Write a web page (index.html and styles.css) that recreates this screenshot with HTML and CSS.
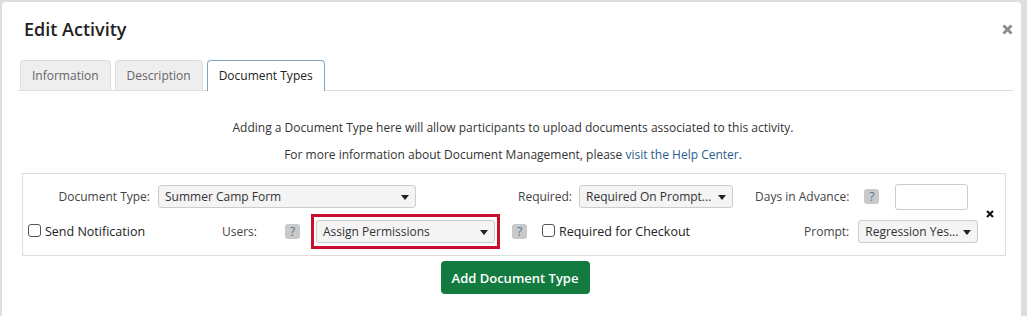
FILE: index.html
```html
<!DOCTYPE html>
<html lang="en">
<head>
    <meta charset="UTF-8">
    <title>Edit Activity</title>
    <link rel="stylesheet" href="styles.css">
</head>
<body>
    <div class="modal">
        <div class="modal-header">
            <h1>Edit Activity</h1>
            <span class="close">
                <svg width="11" height="11" viewBox="0 0 11 11"><path d="M1.5 1.5 L9.5 9.5 M9.5 1.5 L1.5 9.5" stroke="#8a8a8a" stroke-width="2.8"/></svg>
            </span>
        </div>

        <ul class="tabs">
            <li class="tab">Information</li>
            <li class="tab">Description</li>
            <li class="tab active">Document Types</li>
        </ul>

        <div class="tab-body">
            <p class="info">Adding a Document Type here will allow participants to upload documents associated to this activity.</p>
            <p class="info">For more information about Document Management, please <a href="#">visit the Help Center</a>.</p>

            <div class="doc-panel">
                <div class="form-row row-one">
                    <label class="lbl lbl-doctype">Document Type:</label>
                    <div class="select sel-doctype">Summer Camp Form<span class="caret"></span></div>
                    <label class="lbl lbl-required">Required:</label>
                    <div class="select sel-required">Required On Prompt...<span class="caret"></span></div>
                    <label class="lbl lbl-days">Days in Advance:</label>
                    <span class="help help-days">?</span>
                    <input type="text" class="days-input">
                </div>
                <div class="form-row row-two">
                    <span class="check"></span>
                    <label class="check-lbl lbl-notify">Send Notification</label>
                    <label class="lbl lbl-users">Users:</label>
                    <span class="help help-users">?</span>
                    <div class="highlight">
                        <div class="select sel-users">Assign Permissions<span class="caret"></span></div>
                    </div>
                    <span class="help help-perm">?</span>
                    <span class="check check-req"></span>
                    <label class="check-lbl">Required for Checkout</label>
                    <label class="lbl lbl-prompt">Prompt:</label>
                    <div class="select sel-prompt">Regression Yes...<span class="caret"></span></div>
                </div>
                <span class="remove">
                    <svg width="8" height="8" viewBox="0 0 8 8"><path d="M1 1 L7 7 M7 1 L1 7" stroke="#111" stroke-width="2"/></svg>
                </span>
            </div>

            <div class="actions">
                <button class="btn-add">Add Document Type</button>
            </div>
        </div>
    </div>
</body>
</html>
```

FILE: styles.css
```css
* {
    box-sizing: border-box;
    margin: 0;
    padding: 0;
}

body {
    background-color: #dedede;
    font-family: 'Open Sans', 'Noto Sans', sans-serif;
    font-size: 12px;
    color: #333;
    padding: 2px 6px 0 2px;
    height: 316px;
    overflow: hidden;
}

.modal {
    background: #fff;
    border-radius: 4px 4px 0 0;
    height: 320px;
    padding: 0 8px 0 16px;
}

.modal-header {
    display: flex;
    justify-content: space-between;
    align-items: center;
    height: 52px;
    padding: 0 0 0 6px;
}

.modal-header h1 {
    font-size: 18px;
    font-weight: 600;
    color: #222;
    margin-top: 1px;
}

.close {
    display: flex;
    margin-top: 3px;
}

.tabs {
    list-style: none;
    display: flex;
    gap: 4px;
    margin-top: 6px;
    padding-left: 2px;
    border-bottom: 1px solid #ddd;
}

.tab {
    height: 30px;
    padding: 0 11px;
    line-height: 29px;
    font-size: 12px;
    color: #666;
    background: #eee;
    border: 1px solid #ddd;
    border-bottom: none;
    border-radius: 4px 4px 0 0;
    margin-bottom: -1px;
}

.tab.active {
    background: #fff;
    color: #222;
    border-color: #7ea6c6;
    height: 31px;
}

.tab-body {
    padding-top: 28px;
    margin-right: 5px;
}

.info {
    text-align: center;
    line-height: 17px;
    margin-bottom: 10px;
}

.info a {
    color: #2a5d8c;
    text-decoration: none;
}

.doc-panel {
    position: relative;
    border: 1px solid #ddd;
    margin: 0 2px 0 4px;
    padding: 10px 0 5px;
}

.form-row {
    display: flex;
    align-items: center;
}

.row-one {
    height: 25px;
}

.row-two {
    margin-top: 4px;
    height: 37px;
    padding-left: 5px;
}

.lbl {
    color: #444;
    white-space: nowrap;
}

.lbl-doctype {
    width: 127px;
    text-align: right;
    margin-right: 8px;
}

.lbl-required {
    width: 156px;
    text-align: right;
    margin-right: 7px;
}

.lbl-days {
    margin-left: 22px;
}

.select {
    position: relative;
    height: 23px;
    line-height: 21px;
    padding-left: 6px;
    background: #f4f4f4;
    border: 1px solid #ccc;
    border-radius: 3px;
    color: #333;
    white-space: nowrap;
}

.caret {
    position: absolute;
    right: 6px;
    top: 9px;
    border-left: 4px solid transparent;
    border-right: 4px solid transparent;
    border-top: 5px solid #222;
}

.sel-doctype {
    width: 258px;
}

.sel-required {
    width: 154px;
}

.sel-users {
    width: 179px;
}

.sel-prompt {
    width: 120px;
    margin-left: 9px;
}

.help {
    display: inline-block;
    width: 15px;
    height: 15px;
    line-height: 15px;
    text-align: center;
    background: #c9c9c9;
    color: #4f7396;
    border-radius: 3px;
    font-size: 12px;
}

.help-days {
    margin-left: 15px;
}

.days-input {
    margin-left: 16px;
    width: 73px;
    height: 26px;
    border: 1px solid #ccc;
    border-radius: 3px;
}

.check {
    display: inline-block;
    width: 13px;
    height: 13px;
    border: 1px solid #555;
    border-radius: 3px;
    background: #fff;
    margin-top: -2px;
}

.check-lbl {
    color: #222;
    font-size: 12.5px;
    margin-left: 4px;
    white-space: nowrap;
}

.lbl-notify {
    width: 177px;
}

.help-users {
    margin-left: 28px;
}

.highlight {
    margin-left: 11px;
    border: 3px solid #c8102e;
    padding: 3px 2px;
}

.help-perm {
    margin-left: 12px;
}

.check-req {
    margin-left: 15px;
}

.lbl-prompt {
    margin-left: 114px;
}

.remove {
    position: absolute;
    right: 11px;
    top: 36px;
    display: flex;
}

.actions {
    display: flex;
    justify-content: center;
    padding-top: 5px;
    margin-left: 4px;
}

.btn-add {
    width: 149px;
    height: 33px;
    background: #137b40;
    color: #fff;
    border: none;
    border-radius: 4px;
    font-family: 'Open Sans', 'Noto Sans', sans-serif;
    font-size: 13px;
    font-weight: 600;
}
```
